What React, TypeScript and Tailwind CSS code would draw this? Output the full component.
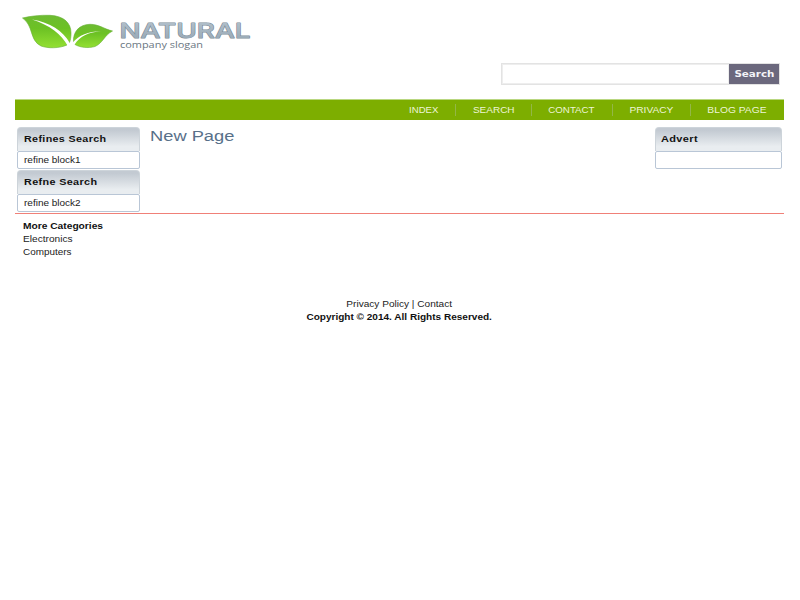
import React from "react";

const nav = [
  { label: "INDEX", cell: "w-[62px]", text: "scale-x-[1.07]" },
  { label: "SEARCH", cell: "w-[76px] pl-px", text: "scale-x-[1.11]" },
  { label: "CONTACT", cell: "w-[81px]", text: "scale-x-[1.08]" },
  { label: "PRIVACY", cell: "w-[78px]", text: "scale-x-[1.13]" },
  { label: "BLOG PAGE", cell: "w-[94px]", text: "scale-x-[1.14]" },
];

function Block({ title, titleClass, body }: { title: string; titleClass: string; body?: string }) {
  return (
    <section className="h-[42px]">
      <h2 className="h-6 rounded-t-[4px] border-x border-t border-[#cdd4da] bg-gradient-to-b from-[#c3cad2] from-10% to-[#e9edf0] to-80% pl-[5px] text-[9px] leading-[22px] font-bold tracking-[0.3px] text-[#111]">
        <span className={"inline-block origin-left whitespace-nowrap " + titleClass}>{title}</span>
      </h2>
      <div className="h-[18px] rounded-[2px] border border-[#b9c6d6] bg-white pl-[6px] text-[9px] leading-[17px] text-[#222]">
        <span className="inline-block origin-left scale-x-[1.11] whitespace-nowrap">{body}</span>
      </div>
    </section>
  );
}

function Logo() {
  return (
    <svg className="block h-[55px] w-[260px]" viewBox="0 0 260 55">
      <defs>
        <linearGradient id="leaf" x1="0" y1="0" x2="0" y2="1">
          <stop offset="0" stopColor="#6dbb32" />
          <stop offset="0.4" stopColor="#6cc124" />
          <stop offset="1" stopColor="#93e032" />
        </linearGradient>
        <linearGradient id="steel" x1="0" y1="0" x2="0" y2="1">
          <stop offset="0" stopColor="#b6c4cf" />
          <stop offset="1" stopColor="#94a5b2" />
        </linearGradient>
      </defs>
      <path d="M22.500 18C31 16 40 15 50 15.300C64 16 71 23 71 33C71 37 70.500 40 69.500 42.500L67 45C59 48.500 48 48.500 41 46C29 40 34 26 22.500 18Z" fill="url(#leaf)" stroke="#64ae33" strokeWidth=".6" />
      <path d="M32 19.500C50 22.500 63 30.500 70 43.500L67.800 46C61.500 34 50 25.500 32 19.500Z" fill="#fff" />
      <path d="M73.500 41.500C73 32 79 24.500 90 24.300C99 24.300 104 29 112.500 31C104 35.500 103 43 95 46.500C88 48.500 80 47.500 75 44.500Z" fill="url(#leaf)" stroke="#64ae33" strokeWidth=".6" />
      <path d="M72.800 42.500C79 35 88 31.500 101 31.200C89 32 80 36 74.600 44.500Z" fill="#fff" />
      <text x="119.500" y="37.800" fontFamily="Inter, sans-serif" fontSize="20.500" fontWeight="500" textLength="131" lengthAdjust="spacingAndGlyphs" fill="url(#steel)" stroke="#7c8c97" strokeWidth="1" strokeLinejoin="round" className="[paint-order:stroke]">NATURAL</text>
      <text x="120" y="48" fontFamily="Open Sans, sans-serif" fontSize="9.800" textLength="83" lengthAdjust="spacingAndGlyphs" fill="#697681">company slogan</text>
    </svg>
  );
}

export default function App() {
  return (
    <div className="h-[600px] w-[800px] overflow-hidden bg-white font-['Liberation_Sans',Arial,sans-serif] text-[9px] text-[#222]">
      <header className="h-[99px]">
        <Logo />
        <form className="mt-[8px] ml-[501px] flex h-[22px] w-[279px] border border-[#e3e3e3] bg-white">
          <input aria-label="Search" className="min-w-0 flex-1 border border-[#eee] outline-none" />
          <button type="button" className="w-[50px] bg-[#6b687d] pt-[2px] font-['DejaVu_Sans',sans-serif] text-[9px] font-bold text-[#f4f4f8]">
            <span className="inline-block scale-x-[1.15]">Search</span>
          </button>
        </form>
      </header>
      <nav className="mr-4 ml-[15px] flex h-[21px] items-center justify-end border-t border-[#b9d780] bg-[#7dae00] text-[#edf5d6]">
        {nav.map((n, i) => (
          <a key={n.label} className={"flex h-3 items-center justify-center pr-px leading-3 " + n.cell + (i ? " border-l border-[#93b747]" : "")}>
            <span className={"inline-block whitespace-nowrap " + n.text}>{n.label}</span>
          </a>
        ))}
      </nav>
      <main className="mr-4 ml-[15px] flex h-[94px] border-b border-[#f08078] pt-[7px]">
        <aside className="ml-[2px] flex w-[123px] flex-col gap-px">
          <Block title="Refines Search" titleClass="ml-px scale-x-[1.19]" body="refine block1" />
          <Block title="Refne Search" titleClass="ml-px scale-x-[1.2]" body="refine block2" />
        </aside>
        <h1 className="ml-[10px] flex-1 text-[15.5px] leading-[18px] text-[#587089]">
          <span className="inline-block origin-left scale-x-[1.18]">New Page</span>
        </h1>
        <aside className="mr-[2px] w-[127px]">
          <Block title="Advert" titleClass="scale-x-[1.22]" />
        </aside>
      </main>
      <section className="mt-[6px] ml-[23px] h-[78px] leading-[13px]">
        <h3 className="font-bold text-[#111]"><span className="inline-block origin-left scale-x-[1.135]">More Categories</span></h3>
        <p><span className="inline-block origin-left scale-x-[1.125]">Electronics</span></p>
        <p><span className="inline-block origin-left scale-x-[1.1]">Computers</span></p>
      </section>
      <footer className="pr-px text-center leading-[13px]">
        <p><span className="inline-block scale-x-[1.12]">Privacy Policy | Contact</span></p>
        <p className="font-bold text-[#111]"><span className="inline-block scale-x-[1.115]">Copyright © 2014. All Rights Reserved.</span></p>
      </footer>
    </div>
  );
}
